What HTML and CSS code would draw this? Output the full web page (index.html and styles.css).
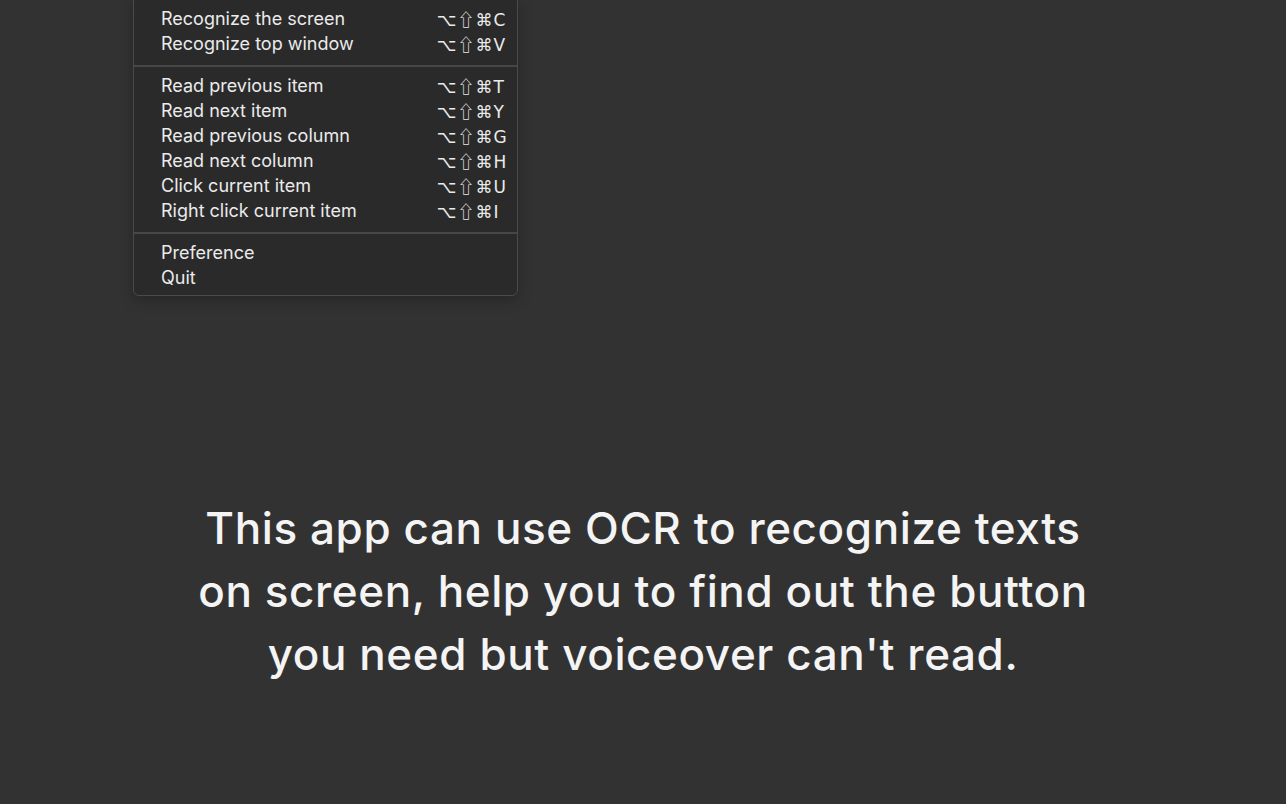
FILE: index.html
```html
<!DOCTYPE html>
<html lang="en">
<head>
    <meta charset="UTF-8">
    <meta name="viewport" content="width=device-width, initial-scale=1.0">
    <title>OCR Reader</title>
    <link rel="stylesheet" href="styles.css">
</head>
<body>
    <div class="stage">
        <!-- status bar menu -->
        <div class="menu">
            <div class="menu-item"><span class="label">Recognize the screen</span><span class="keys">⌥<i>⇧</i>⌘C</span></div>
            <div class="menu-item"><span class="label">Recognize top window</span><span class="keys">⌥<i>⇧</i>⌘V</span></div>
            <div class="separator"></div>
            <div class="menu-item"><span class="label">Read previous item</span><span class="keys">⌥<i>⇧</i>⌘T</span></div>
            <div class="menu-item"><span class="label">Read next item</span><span class="keys">⌥<i>⇧</i>⌘Y</span></div>
            <div class="menu-item"><span class="label">Read previous column</span><span class="keys">⌥<i>⇧</i>⌘G</span></div>
            <div class="menu-item"><span class="label">Read next column</span><span class="keys">⌥<i>⇧</i>⌘H</span></div>
            <div class="menu-item"><span class="label">Click current item</span><span class="keys">⌥<i>⇧</i>⌘U</span></div>
            <div class="menu-item"><span class="label">Right click current item</span><span class="keys">⌥<i>⇧</i>⌘I</span></div>
            <div class="separator"></div>
            <div class="menu-item"><span class="label">Preference</span></div>
            <div class="menu-item"><span class="label">Quit</span></div>
        </div>

        <!-- description -->
        <p class="intro">This app can use OCR to recognize texts<br>on screen, help you to find out the button<br>you need but voiceover can't read.</p>
    </div>
</body>
</html>
```

FILE: styles.css
```css
html, body {
    margin: 0;
    height: 100%;
    background-color: #323232;
}
body {
    font-family: Inter, "Liberation Sans", Arial, sans-serif;
    overflow: hidden;
}
.stage {
    padding-left: 133px;
}
.menu {
    width: 383px;
    margin-top: -1px;
    padding: 6px 0 5px;
    background-color: #2a2a2a;
    border: 1px solid #4a4a4a;
    border-radius: 0 0 6px 6px;
    box-shadow: 0 4px 14px rgba(0, 0, 0, 0.25);
    color: #ebebeb;
    font-size: 18px;
}
.menu-item {
    display: flex;
    align-items: center;
    height: 25px;
    padding: 0 10px 0 27px;
}
.menu-item .label {
    flex: 1;
}
.menu-item .keys {
    width: 70px;
    font-family: "DejaVu Sans", sans-serif;
    font-size: 17px;
    letter-spacing: 1px;
}
.menu-item .keys i {
    font-style: normal;
    font-family: "Noto Sans CJK SC", "DejaVu Sans", sans-serif;
}
.separator {
    height: 2px;
    margin: 9px 0 6px;
    background-color: #474747;
}
.intro {
    margin: 201px 0 0 -133px;
    text-align: center;
    font-size: 44px;
    font-weight: 500;
    line-height: 63px;
    color: #f4f4f4;
    letter-spacing: 0.6px;
}
```
